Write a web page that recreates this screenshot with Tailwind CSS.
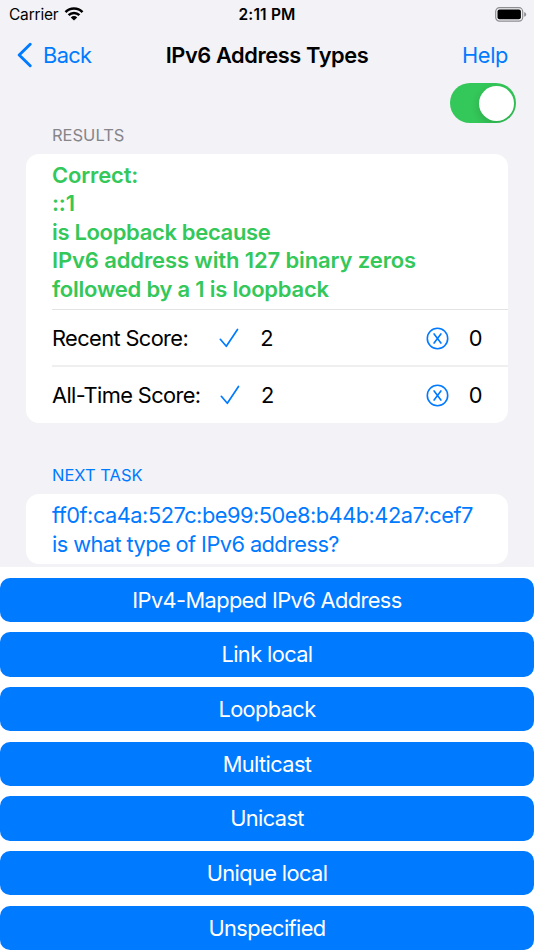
<!DOCTYPE html>
<html lang="en">
<head>
    <meta charset="UTF-8">
    <meta name="viewport" content="width=device-width, initial-scale=1.0">
    <title>IPv6 Address Types</title>
    <script src="https://cdn.jsdelivr.net/npm/@tailwindcss/browser@4"></script>
</head>
<body class="h-[950px] overflow-hidden bg-white font-['Inter','Liberation_Sans',sans-serif] text-[21.8px] leading-[28.4px] tracking-[-0.61px] text-black">

    <div class="h-[567.4px] bg-[#f2f2f7]">
        <!-- Status Bar -->
        <div class="grid h-[28px] grid-cols-3 items-center text-[15.5px] leading-[28px] tracking-normal">
            <div class="flex items-center gap-[6px] pt-px pl-[9px]">
                <span class="tracking-[-0.2px]">Carrier</span>
                <svg class="h-[15px] w-5 -mt-[3px]" viewBox="0 0 20 15">
                    <path d="M0.6 5.2 A13.4 13.4 0 0 1 19.4 5.2 L17.6 7 A10.8 10.8 0 0 0 2.4 7 Z" />
                    <path d="M3.7 8.3 A9 9 0 0 1 16.3 8.3 L14.5 10.1 A6.5 6.5 0 0 0 5.5 10.1 Z" />
                    <path d="M6.8 11.4 A4.6 4.6 0 0 1 13.2 11.4 L10 14.6 Z" />
                </svg>
            </div>
            <span class="pt-px text-center font-semibold tracking-[0.15px]">2:11 PM</span>
            <div class="flex justify-end pr-[7px]">
                <svg class="h-[15px] w-8 -mt-px" viewBox="0 0 32 15">
                    <rect x="0.7" y="0.7" width="27" height="13.4" rx="3.8" fill="none" stroke="#8e8e91" stroke-width="1.2" />
                    <rect x="2.5" y="2.5" width="23.4" height="9.8" rx="2" />
                    <path d="M29.2 5 Q31.2 5.6 31.2 7.4 T29.2 9.8 Z" fill="#8e8e91" />
                </svg>
            </div>
        </div>

        <!-- Navigation -->
        <div class="grid h-[54px] grid-cols-[1fr_auto_1fr] items-center px-[17px]">
            <a class="flex items-center gap-[11px] text-[#007aff]">
                <svg class="h-[26px] w-[15px] -mt-px" viewBox="0 0 15 26" fill="none" stroke="currentColor" stroke-width="2.9" stroke-linecap="round" stroke-linejoin="round">
                    <path d="M13.2 2.2 L2.2 13 L13.2 23.8" />
                </svg>
                <span>Back</span>
            </a>
            <h1 class="font-semibold tracking-[-0.4px]">IPv6 Address Types</h1>
            <a class="pr-[9px] text-right tracking-[-0.4px] text-[#007aff]">Help</a>
        </div>
        <div class="flex justify-end pr-[18px]">
            <div class="mt-px flex h-10 w-[66px] justify-end overflow-hidden rounded-full bg-[#34c759] p-[2.5px]">
                <div class="size-[35px] rounded-full bg-white shadow-[0_3px_8px_rgba(0,0,0,0.15)]"></div>
            </div>
        </div>

        <!-- Results -->
        <h2 class="h-[31px] pl-[52px] text-[16.5px] leading-[25px] tracking-normal text-[#85858a]">RESULTS</h2>
        <div class="ml-[26px] h-[269px] w-[482px] rounded-[13px] bg-white pl-[26px]">
            <div class="h-[156px] border-b border-[#e3e3e5] pt-[7px] text-[22px] font-semibold tracking-[-0.15px] text-[#34c759]">
                <p>Correct:</p>
                <p>::1</p>
                <p class="tracking-[-0.33px]">is Loopback because</p>
                <p class="tracking-[-0.12px]">IPv6 address with 127 binary zeros</p>
                <p class="tracking-[-0.22px]">followed by a 1 is loopback</p>
            </div>
            <div class="flex h-[57px] items-center border-b-2 border-[#efeff0] pt-px pr-[26px]">
                <span>Recent Score:</span>
                <svg class="ml-[31px] h-5 w-5 text-[#007aff]" viewBox="0 0 20 20" fill="none" stroke="currentColor" stroke-width="1.7" stroke-linecap="round" stroke-linejoin="round">
                    <path d="M1.3 11.3 L7.3 18.3 L18.5 1.5" />
                </svg>
                <span class="ml-[21px]">2</span>
                <svg class="ml-auto size-[23px] text-[#007aff]" viewBox="0 0 23 23" fill="none" stroke="currentColor" stroke-width="1.6" stroke-linecap="round">
                    <circle cx="11.5" cy="11.5" r="10.2" />
                    <path d="M8.1 6.9 L14.9 16.1 M14.9 6.9 L8.1 16.1" />
                </svg>
                <span class="ml-[19.5px]">0</span>
            </div>
            <div class="flex h-14 items-center pr-[26px]">
                <span>All-Time Score:</span>
                <svg class="ml-[19.5px] h-5 w-5 text-[#007aff]" viewBox="0 0 20 20" fill="none" stroke="currentColor" stroke-width="1.7" stroke-linecap="round" stroke-linejoin="round">
                    <path d="M1.3 11.3 L7.3 18.3 L18.5 1.5" />
                </svg>
                <span class="ml-[21px]">2</span>
                <svg class="ml-auto size-[23px] text-[#007aff]" viewBox="0 0 23 23" fill="none" stroke="currentColor" stroke-width="1.6" stroke-linecap="round">
                    <circle cx="11.5" cy="11.5" r="10.2" />
                    <path d="M8.1 6.9 L14.9 16.1 M14.9 6.9 L8.1 16.1" />
                </svg>
                <span class="ml-[19.5px]">0</span>
            </div>
        </div>

        <!-- Next Task -->
        <h2 class="mt-[40.4px] h-[31px] pl-[52px] text-[16.5px] leading-[25px] tracking-normal text-[#007aff]">NEXT TASK</h2>
        <div class="ml-[26px] h-[70px] w-[482px] rounded-[13px] bg-white pt-[7px] pl-[26px] text-[#007aff]">
            <p class="tracking-[-0.5px]">ff0f:ca4a:527c:be99:50e8:b44b:42a7:cef7</p>
            <p class="tracking-[-0.58px]">is what type of IPv6 address?</p>
        </div>
    </div>

    <!-- Answers -->
    <div class="flex flex-col gap-[10.4px] pt-[10.2px] text-white">
        <button class="h-[44.3px] rounded-[10px] bg-[#007aff]">IPv4-Mapped IPv6 Address</button>
        <button class="h-[44.3px] rounded-[10px] bg-[#007aff]">Link local</button>
        <button class="h-[44.3px] rounded-[10px] bg-[#007aff]">Loopback</button>
        <button class="h-[44.3px] rounded-[10px] bg-[#007aff]">Multicast</button>
        <button class="h-[44.3px] rounded-[10px] bg-[#007aff]">Unicast</button>
        <button class="h-[44.3px] rounded-[10px] bg-[#007aff]">Unique local</button>
        <button class="h-[44.3px] rounded-[10px] bg-[#007aff]">Unspecified</button>
    </div>

</body>
</html>
